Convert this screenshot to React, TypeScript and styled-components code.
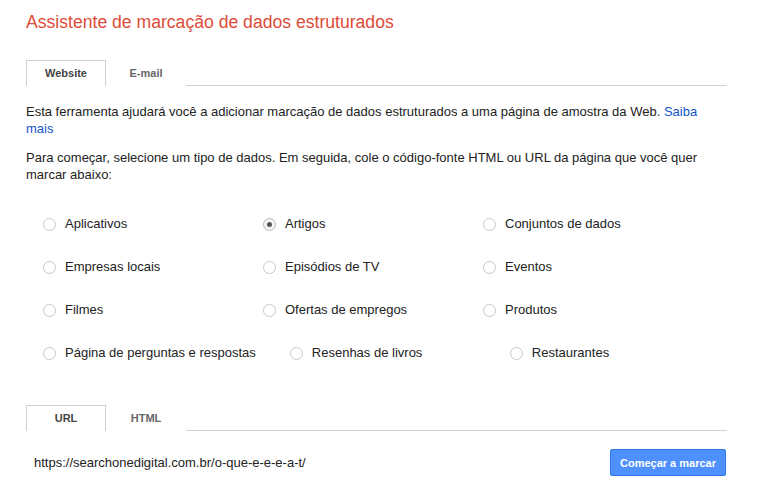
import styled, { createGlobalStyle } from "styled-components"

const GlobalStyle = createGlobalStyle`
  html, body {
    margin: 0;
    padding: 0;
    background: #fff;
  }
  body {
    font-family: "Liberation Sans", Arial, sans-serif;
    color: #222;
  }
`

const tipos = [
  ["Aplicativos", "Artigos", "Conjuntos de dados"],
  ["Empresas locais", "Episódios de TV", "Eventos"],
  ["Filmes", "Ofertas de empregos", "Produtos"],
  ["Página de perguntas e respostas", "Resenhas de livros", "Restaurantes"],
]

const App = () => {
  return (
    <>
      <GlobalStyle />
      <Page>
        <Title>Assistente de marcação de dados estruturados</Title>
        <TabBar>
          <Tab $active>Website</Tab>
          <Tab>E-mail</Tab>
        </TabBar>
        <Text>
          Esta ferramenta ajudará você a adicionar marcação de dados estruturados a uma página de amostra da Web.{" "}
          <Link href="#">Saiba mais</Link>
        </Text>
        <Text $gap>
          Para começar, selecione um tipo de dados. Em seguida, cole o código-fonte HTML ou URL da página que você quer
          marcar abaixo:
        </Text>
        <Options>
          {tipos.map((row, i) => (
            <OptionRow key={i}>
              {row.map((t) => (
                <Option key={t}>
                  <Radio $checked={t === "Artigos"} />
                  <span>{t}</span>
                </Option>
              ))}
            </OptionRow>
          ))}
        </Options>
        <TabBar $bottom>
          <Tab $active>URL</Tab>
          <Tab>HTML</Tab>
        </TabBar>
        <UrlRow>
          <Url>https://searchonedigital.com.br/o-que-e-e-e-a-t/</Url>
          <Button>Começar a marcar</Button>
        </UrlRow>
      </Page>
    </>
  )
}
export default App

const Page = styled.div`
width:701px;
padding:11px 0 0 26px;
`

const Title = styled.h1`
margin:0;
font-size:17.6px;
line-height:22px;
font-weight:normal;
color:#dd4b39;
`

const TabBar = styled.div<{ $bottom?: boolean }>`
display:flex;
margin-top:${(p) => (p.$bottom ? "44px" : "27px")};
border-bottom:1px solid #d0d0d0;
`

const Tab = styled.div<{ $active?: boolean }>`
width:80px;
box-sizing:border-box;
display:flex;
align-items:center;
justify-content:center;
font-size:11px;
font-weight:bold;
color:${(p) => (p.$active ? "#444" : "#666")};
border:1px solid ${(p) => (p.$active ? "#d0d0d0" : "transparent")};
border-bottom:none;
background:#fff;
margin-bottom:-1px;
height:26px;
padding-bottom:1px;
`

const Text = styled.p<{ $gap?: boolean }>`
margin:${(p) => (p.$gap ? "12px" : "17px")} 0 0;
font-size:13px;
line-height:17px;
color:#222;
`

const Link = styled.a`
color:#1155cc;
text-decoration:none;
`

const Options = styled.div`
margin-top:32px;
padding-left:17px;
display:flex;
flex-direction:column;
gap:26px;
`

const OptionRow = styled.div`
display:flex;
`

const Option = styled.label`
min-width:220px;
flex-shrink:0;
white-space:nowrap;
box-sizing:border-box;
padding-right:34px;
display:flex;
align-items:center;
gap:9px;
font-size:13px;
line-height:17px;
color:#222;
`

const Radio = styled.span<{ $checked?: boolean }>`
width:13px;
height:13px;
box-sizing:border-box;
border-radius:50%;
border:1px solid ${(p) => (p.$checked ? "#b8b8b8" : "#c8c8c8")};
background:${(p) => (p.$checked ? "#f4f4f4" : "#fff")};
display:flex;
align-items:center;
justify-content:center;
flex-shrink:0;
margin-top:1px;
&::after{
  content:"";
  width:5px;
  height:5px;
  border-radius:50%;
  background:#555;
  display:${(p) => (p.$checked ? "block" : "none")};
}
`

const UrlRow = styled.div`
display:flex;
justify-content:space-between;
align-items:center;
margin-top:18px;
padding:0 1px 0 8px;
`

const Url = styled.span`
font-size:13px;
color:#222;
`

const Button = styled.button`
height:27px;
padding:0 9px;
border:1px solid #3079ed;
border-radius:2px;
background:#4d90fe;
color:#fff;
font-family:"Liberation Sans", Arial, sans-serif;
font-size:11px;
font-weight:bold;
`
